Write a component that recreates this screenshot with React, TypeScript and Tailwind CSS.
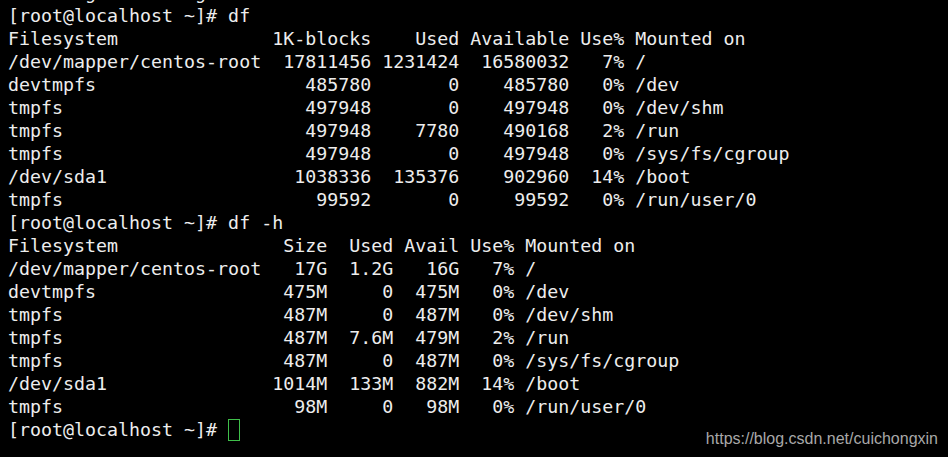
import React from 'react';

const lines = [
  '       g         g',
  '[root@localhost ~]# df',
  'Filesystem              1K-blocks    Used Available Use% Mounted on',
  '/dev/mapper/centos-root  17811456 1231424  16580032   7% /',
  'devtmpfs                   485780       0    485780   0% /dev',
  'tmpfs                      497948       0    497948   0% /dev/shm',
  'tmpfs                      497948    7780    490168   2% /run',
  'tmpfs                      497948       0    497948   0% /sys/fs/cgroup',
  '/dev/sda1                 1038336  135376    902960  14% /boot',
  'tmpfs                       99592       0     99592   0% /run/user/0',
  '[root@localhost ~]# df -h',
  'Filesystem               Size  Used Avail Use% Mounted on',
  '/dev/mapper/centos-root   17G  1.2G   16G   7% /',
  'devtmpfs                 475M     0  475M   0% /dev',
  'tmpfs                    487M     0  487M   0% /dev/shm',
  'tmpfs                    487M  7.6M  479M   2% /run',
  'tmpfs                    487M     0  487M   0% /sys/fs/cgroup',
  '/dev/sda1               1014M  133M  882M  14% /boot',
  'tmpfs                     98M     0   98M   0% /run/user/0',
];

export default function App(): React.ReactElement {
  return (
    <div className="w-[948px] h-[457px] bg-black overflow-hidden flex flex-col">
      <pre className="-mt-[19px] pl-[8px] text-[18.3px] leading-[23px] text-[#ededed] font-['DejaVu_Sans_Mono',monospace] whitespace-pre">
        {lines.map((l, i) => (
          <div key={i}>{l}</div>
        ))}
        <div className="flex items-center">
          <span>[root@localhost ~]# </span>
          <span className="w-[12px] h-[22px] border border-[#3fbf4a]" />
        </div>
      </pre>
      <div className="flex justify-end pr-[10px] -mt-[14px]">
        <span className="text-[16px] text-[#a8a8a8] font-['Liberation_Sans',Arial,sans-serif]">
          https://blog.csdn.net/cuichongxin
        </span>
      </div>
    </div>
  );
}
